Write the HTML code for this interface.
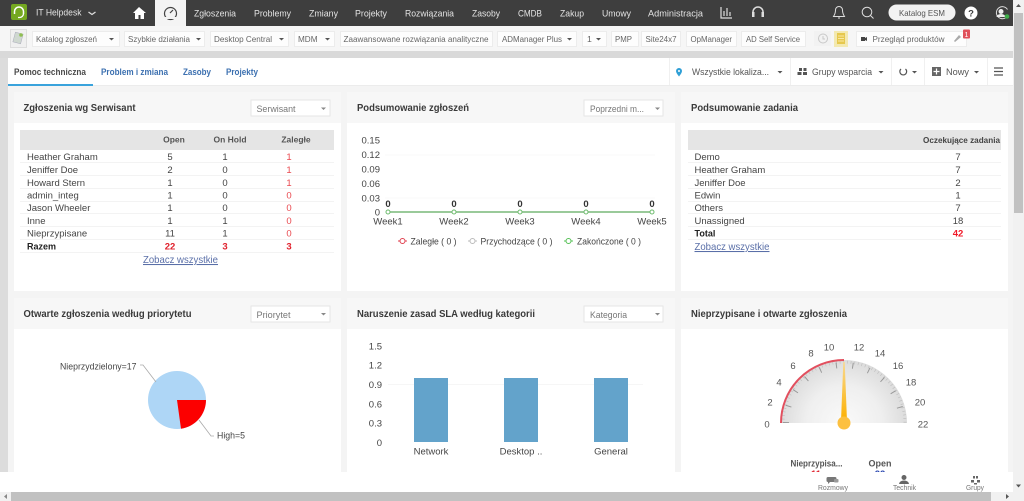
<!DOCTYPE html>
<html lang="pl"><head><meta charset="utf-8"><title>IT Helpdesk</title>
<style>
html,body{margin:0;padding:0;width:1024px;height:501px;overflow:hidden;background:#fff}
svg{display:block;font-family:"Liberation Sans",sans-serif;font-size:9.5px;fill:#444;filter:blur(.3px)}
.n{fill:#e4e4e4;font-size:9.5px}
.t{fill:#666;font-size:8.7px}
.h{font-weight:bold;font-size:10.5px;fill:#3a3a3a}
.s{fill:#777;font-size:9.5px}
.c{text-anchor:middle}
.r{text-anchor:end}
.b{font-weight:bold}
.red{fill:#e9494f}
.rb{fill:#e0202c;font-weight:bold}
.tab{fill:#3c70b0;font-weight:bold;font-size:9.5px}
.l{fill:#5a6fa8;font-size:10.5px;text-decoration:underline}
.box{fill:#fdfdfd;stroke:#ececec}
.sel{fill:#fff;stroke:#e6e6e6}
.ar{fill:#555}
.ln{stroke:#f3f3f3;stroke-width:1}
.ft{fill:#777;font-size:7.5px;text-anchor:middle}
</style></head><body>
<svg width="1024" height="501" viewBox="0 0 1024 501" xmlns="http://www.w3.org/2000/svg">
<defs>
<radialGradient id="g" cx="844" cy="423" r="63" gradientUnits="userSpaceOnUse"><stop offset="0" stop-color="#fafafa"/><stop offset=".6" stop-color="#efefef"/><stop offset="1" stop-color="#dcdcdc"/></radialGradient>
<linearGradient id="nd" x1="0" y1="0" x2="0" y2="1"><stop offset="0" stop-color="#f8d890"/><stop offset="1" stop-color="#fdb000"/></linearGradient>
</defs>

<rect width="1024" height="501" fill="#f4f4f4"/>
<!-- top bar -->
<rect width="1013" height="26" fill="#3e3e3e"/>
<rect x="155" width="31" height="26" fill="#f4f4f4"/>
<rect x="11" y="4" width="16" height="16" rx="2" fill="#74a820"/>
<path d="M14.500 14v-2.500a4.500 4.500 0 0 1 9 0V14" fill="none" stroke="#fff" stroke-width="1.500"/><path d="M23.500 14a4 4 0 0 1-4 3.500h-1.500" fill="none" stroke="#fff" stroke-width="1.300"/>
<text x="36" y="15.500" class="n" textLength="45.500" lengthAdjust="spacingAndGlyphs">IT Helpdesk</text>
<path d="M88.500 12l3.500 2.500 3.500-2.500" fill="none" stroke="#ddd" stroke-width="1.300"/>
<path d="M139 7l-6 6h2v6h3.500v-4h2v4h3.500v-6h2z" fill="#fff"/>
<circle cx="170.500" cy="13.500" r="6" fill="none" stroke="#444" stroke-width="1.200"/><path d="M170 13l3-3" stroke="#444" stroke-width="1.200"/><path d="M165 18h11" stroke="#f4f4f4" stroke-width="2"/>
<text x="194" y="16.500" class="n" textLength="42" lengthAdjust="spacingAndGlyphs">Zgłoszenia</text>
<text x="254" y="16.500" class="n" textLength="37" lengthAdjust="spacingAndGlyphs">Problemy</text>
<text x="309" y="16.500" class="n" textLength="29" lengthAdjust="spacingAndGlyphs">Zmiany</text>
<text x="355" y="16.500" class="n" textLength="32" lengthAdjust="spacingAndGlyphs">Projekty</text>
<text x="405" y="16.500" class="n" textLength="49" lengthAdjust="spacingAndGlyphs">Rozwiązania</text>
<text x="472" y="16.500" class="n" textLength="28" lengthAdjust="spacingAndGlyphs">Zasoby</text>
<text x="518" y="16.500" class="n" textLength="24" lengthAdjust="spacingAndGlyphs">CMDB</text>
<text x="560" y="16.500" class="n" textLength="24" lengthAdjust="spacingAndGlyphs">Zakup</text>
<text x="602" y="16.500" class="n" textLength="29" lengthAdjust="spacingAndGlyphs">Umowy</text>
<text x="648" y="16.500" class="n" textLength="55" lengthAdjust="spacingAndGlyphs">Administracja</text>
<path d="M721 7v11h11M724 16v-5M727 16v-8M730 16v-4" fill="none" stroke="#ddd" stroke-width="1.200"/>
<path d="M753 15v-3a5 5 0 0 1 10 0v3" fill="none" stroke="#ddd" stroke-width="1.500"/><rect x="752" y="12" width="2.500" height="5" fill="#ddd"/><rect x="761.500" y="12" width="2.500" height="5" fill="#ddd"/>
<path d="M839 6.500a3.500 3.500 0 0 0-3.500 3.500c0 4-1.500 5.500-2 6.500h11c-.5-1-2-2.500-2-6.500a3.500 3.500 0 0 0-3.500-3.500zM838 18h2" fill="none" stroke="#ddd" stroke-width="1"/>
<circle cx="867" cy="12" r="4.800" fill="none" stroke="#ddd" stroke-width="1"/><path d="M870.500 15.500l3 3" stroke="#ddd"/>
<rect x="888.500" y="4.500" width="67" height="16" rx="8" fill="#f2f2f2"/>
<text x="899" y="16" font-size="8.500" fill="#555" textLength="46" lengthAdjust="spacingAndGlyphs">Katalog ESM</text>
<circle cx="971" cy="13" r="6.500" fill="#fff"/><text x="971" y="16.500" class="c b" font-size="9.500" fill="#3e3e3e">?</text>
<path d="M1007.500 9.500a6 6 0 1 0-1.500 8" fill="none" stroke="#ddd"/><circle cx="1001" cy="11.500" r="2.500" fill="#eee"/><path d="M996.500 17a4.500 3 0 0 1 9 0z" fill="#eee"/><circle cx="1007" cy="16.500" r="2.300" fill="#3fae49"/>

<!-- toolbar -->
<rect y="26" width="1013" height="25" fill="#f6f6f6"/>
<rect y="51" width="1013" height="7" fill="#d9d9d9"/>
<rect x="10.500" y="29.500" width="16" height="18" fill="#f0f0f0" stroke="#ddd"/><rect x="14" y="33" width="8" height="10" fill="#cfd8d0" stroke="#aab" stroke-width=".5" transform="rotate(15 18 38)"/><circle cx="21" cy="35" r="1.800" fill="#8fbf50"/>
<g>
<rect class="box" x="32.500" y="31.500" width="87" height="15"/><text x="36" y="42" class="t" textLength="61" lengthAdjust="spacingAndGlyphs">Katalog zgłoszeń</text><path class="ar" d="M109 38h5l-2.500 2.500z"/>
<rect class="box" x="124.500" y="31.500" width="80" height="15"/><text x="128" y="42" class="t" textLength="62" lengthAdjust="spacingAndGlyphs">Szybkie działania</text><path class="ar" d="M196 38h5l-2.500 2.500z"/>
<rect class="box" x="210.500" y="31.500" width="78" height="15"/><text x="214" y="42" class="t" textLength="58" lengthAdjust="spacingAndGlyphs">Desktop Central</text><path class="ar" d="M279 38h5l-2.500 2.500z"/>
<rect class="box" x="294.500" y="31.500" width="40" height="15"/><text x="298" y="42" class="t" textLength="19.500" lengthAdjust="spacingAndGlyphs">MDM</text><path class="ar" d="M325 38h5l-2.500 2.500z"/>
<rect class="box" x="340.500" y="31.500" width="152" height="15"/><text x="343.500" y="42" class="t" textLength="145" lengthAdjust="spacingAndGlyphs">Zaawansowane rozwiązania analityczne</text>
<rect class="box" x="497.500" y="31.500" width="79" height="15"/><text x="502" y="42" class="t" textLength="60" lengthAdjust="spacingAndGlyphs">ADManager Plus</text><path class="ar" d="M567 38h5l-2.500 2.500z"/>
<rect class="box" x="582.500" y="31.500" width="24" height="15"/><text x="587" y="42" class="t">1</text><path class="ar" d="M596 38h5l-2.500 2.500z"/>
<rect class="box" x="611.500" y="31.500" width="27" height="15"/><text x="615" y="42" class="t" textLength="17" lengthAdjust="spacingAndGlyphs">PMP</text>
<rect class="box" x="641.500" y="31.500" width="39" height="15"/><text x="645.500" y="42" class="t" textLength="31" lengthAdjust="spacingAndGlyphs">Site24x7</text>
<rect class="box" x="686.500" y="31.500" width="50" height="15"/><text x="690.500" y="42" class="t" textLength="41.500" lengthAdjust="spacingAndGlyphs">OpManager</text>
<rect class="box" x="741.500" y="31.500" width="64" height="15"/><text x="746" y="42" class="t" textLength="54" lengthAdjust="spacingAndGlyphs">AD Self Service</text>
</g>
<rect x="814" y="31" width="17" height="15" fill="#f2f2f2"/><circle cx="823" cy="38.500" r="4.500" fill="none" stroke="#c8c8c8"/><path d="M823 36v3h2" fill="none" stroke="#c8c8c8"/>
<rect x="834" y="31" width="14" height="16" fill="#f3e9b0"/><rect x="837" y="33" width="8" height="11" fill="#e6c84e"/><path d="M838 36h6M838 38.500h6M838 41h6" stroke="#fff3c0" stroke-width=".8"/>
<rect class="box" x="856.500" y="31.500" width="110" height="15"/>
<rect x="861" y="37" width="4" height="4" fill="#444"/><path d="M865 38l2-1v4l-2-1z" fill="#444"/>
<text x="872.500" y="42" class="t" textLength="72" lengthAdjust="spacingAndGlyphs">Przegląd produktów</text>
<path d="M954 41l5-6 2 2-6 5z" fill="#aaa"/>
<rect x="963" y="29.500" width="7" height="9" rx="1" fill="#e0505a"/><text x="966.500" y="37" class="c" font-size="7" fill="#fff">1</text>

<!-- tab bar -->
<rect y="58" width="8" height="414" fill="#dcdcdc"/>
<rect x="8" y="58" width="1005" height="27" fill="#fff"/>
<rect x="8" y="84" width="85" height="2" fill="#3aa3dc"/>
<rect x="93" y="85" width="920" height="1" fill="#ececec"/>
<text x="14" y="75" font-size="9.500" class="b" fill="#4a4a4a" textLength="72" lengthAdjust="spacingAndGlyphs">Pomoc techniczna</text>
<text x="101" y="75" class="tab" textLength="67" lengthAdjust="spacingAndGlyphs">Problem i zmiana</text>
<text x="183" y="75" class="tab" textLength="28" lengthAdjust="spacingAndGlyphs">Zasoby</text>
<text x="226" y="75" class="tab" textLength="32" lengthAdjust="spacingAndGlyphs">Projekty</text>
<path d="M669.500 58v27M790.500 58v27M891.500 58v27M924.500 58v27M987.500 58v27" stroke="#f0f0f0"/>
<path d="M682 71a3 3 0 0 0-6 0c0 2 3 5.500 3 5.500s3-3.500 3-5.500z" fill="#2f9fd6"/><circle cx="679" cy="71" r="1" fill="#fff"/>
<text x="692" y="75" font-size="9.500" fill="#555" textLength="77" lengthAdjust="spacingAndGlyphs">Wszystkie lokaliza...</text><path class="ar" d="M777.500 71h5l-2.500 2.500z"/>
<path d="M799 68h3v3h-3zM803.500 68h3v3h-3zM797.500 72h4v3h-4zM803 72h4v3h-4z" fill="#555"/>
<text x="812" y="75" font-size="9.500" fill="#555" textLength="60" lengthAdjust="spacingAndGlyphs">Grupy wsparcia</text><path class="ar" d="M878.500 71h5l-2.500 2.500z"/>
<path d="M905.500 69a3.400 3.400 0 1 1-4.500 0" fill="none" stroke="#555" stroke-width="1.200"/><path class="ar" d="M912 71h5l-2.500 2.500z"/>
<rect x="932" y="67" width="9" height="9" fill="#666"/><path d="M936.500 68.500v6M933.500 71.500h6" stroke="#fff" stroke-width="1.200"/>
<text x="946" y="75" font-size="9.500" fill="#555" textLength="23" lengthAdjust="spacingAndGlyphs">Nowy</text><path class="ar" d="M974 71h5l-2.500 2.500z"/>
<path d="M994 68h9M994 71.500h9M994 75h9" stroke="#555" stroke-width="1.200"/>

<!-- cards -->
<g fill="#fff">
<rect x="14" y="123" width="327" height="168"/><rect x="347" y="123" width="328" height="168"/><rect x="681" y="123" width="327" height="168"/>
<rect x="14" y="329" width="327" height="143"/><rect x="347" y="329" width="328" height="143"/><rect x="681" y="329" width="327" height="143"/>
</g>
<g fill="#f7f7f7">
<rect x="14" y="92" width="327" height="31"/><rect x="347" y="92" width="328" height="31"/><rect x="681" y="92" width="327" height="31"/>
<rect x="14" y="298" width="327" height="31"/><rect x="347" y="298" width="328" height="31"/><rect x="681" y="298" width="327" height="31"/>
</g>

<text x="23.500" y="111" class="h" textLength="112" lengthAdjust="spacingAndGlyphs">Zgłoszenia wg Serwisant</text>
<rect class="sel" x="251" y="100" width="79" height="16"/><text x="256.500" y="112" class="s" textLength="39" lengthAdjust="spacingAndGlyphs">Serwisant</text><path fill="#888" d="M321 107.500h5l-2.500 2.500z"/>
<rect x="20" y="130" width="314" height="20" fill="#e5e5e5"/>
<g font-size="8.500" fill="#555">
<text x="174" y="142.500" class="c b">Open</text><text x="230" y="142.500" class="c b">On Hold</text><text x="296" y="142.500" class="c b">Zaległe</text>
</g>
<path class="ln" d="M20 162.500h314M20 175.500h314M20 188.500h314M20 201.500h314M20 213.500h314M20 226.500h314M20 239.500h314M20 252.500h314"/>
<g>
<text x="27" y="160">Heather Graham</text><text x="170" y="160" class="c">5</text><text x="225" y="160" class="c">1</text><text x="289" y="160" class="c red">1</text>
<text x="27" y="173">Jeniffer Doe</text><text x="170" y="173" class="c">2</text><text x="225" y="173" class="c">0</text><text x="289" y="173" class="c red">1</text>
<text x="27" y="186">Howard Stern</text><text x="170" y="186" class="c">1</text><text x="225" y="186" class="c">0</text><text x="289" y="186" class="c red">1</text>
<text x="27" y="198.500">admin_integ</text><text x="170" y="198.500" class="c">1</text><text x="225" y="198.500" class="c">0</text><text x="289" y="198.500" class="c red">0</text>
<text x="27" y="211">Jason Wheeler</text><text x="170" y="211" class="c">1</text><text x="225" y="211" class="c">0</text><text x="289" y="211" class="c red">0</text>
<text x="27" y="224">Inne</text><text x="170" y="224" class="c">1</text><text x="225" y="224" class="c">1</text><text x="289" y="224" class="c red">0</text>
<text x="27" y="236.500">Nieprzypisane</text><text x="170" y="236.500" class="c">11</text><text x="225" y="236.500" class="c">1</text><text x="289" y="236.500" class="c red">0</text>
<text x="27" y="249.500" class="b" fill="#222" font-size="9">Razem</text><text x="170" y="249.500" class="c rb">22</text><text x="225" y="249.500" class="c rb">3</text><text x="289" y="249.500" class="c rb">3</text>
</g>
<text x="143" y="263" class="l" textLength="75" lengthAdjust="spacingAndGlyphs">Zobacz wszystkie</text>

<text x="357" y="111" class="h" textLength="112" lengthAdjust="spacingAndGlyphs">Podsumowanie zgłoszeń</text>
<rect class="sel" x="584" y="100" width="79" height="16"/><text x="590" y="112" class="s" textLength="54" lengthAdjust="spacingAndGlyphs">Poprzedni m...</text><path fill="#888" d="M655 107.500h5l-2.500 2.500z"/>
<text x="380" y="143.500" class="r">0.15</text><text x="380" y="158" class="r">0.12</text><text x="380" y="172.500" class="r">0.09</text><text x="380" y="187" class="r">0.06</text><text x="380" y="201.500" class="r">0.03</text><text x="380" y="215.500" class="r">0</text>
<path d="M385 155h270M385 198h270" stroke="#f8f8f8"/>
<path d="M388 212h264" stroke="#79b879" stroke-width="1.500"/>
<g fill="#fff" stroke="#6dbb6d"><circle cx="388" cy="212" r="2"/><circle cx="454" cy="212" r="2"/><circle cx="520" cy="212" r="2"/><circle cx="586" cy="212" r="2"/><circle cx="652" cy="212" r="2"/></g>
<g fill="#333"><text x="388" y="207" class="c b">0</text><text x="454" y="207" class="c b">0</text><text x="520" y="207" class="c b">0</text><text x="586" y="207" class="c b">0</text><text x="652" y="207" class="c b">0</text></g>
<text x="388" y="224.500" class="c">Week1</text><text x="454" y="224.500" class="c">Week2</text><text x="520" y="224.500" class="c">Week3</text><text x="586" y="224.500" class="c">Week4</text><text x="652" y="224.500" class="c">Week5</text>
<path d="M398 241h9" stroke="#e0404f"/><circle cx="402.500" cy="241" r="2.500" fill="#fff" stroke="#e0404f"/>
<text x="410.500" y="244.500" textLength="46" lengthAdjust="spacingAndGlyphs">Zaległe ( 0 )</text>
<path d="M468 241h9" stroke="#bbb"/><circle cx="472.500" cy="241" r="2.500" fill="#fff" stroke="#bbb"/>
<text x="480.500" y="244.500" textLength="72" lengthAdjust="spacingAndGlyphs">Przychodzące ( 0 )</text>
<path d="M564 241h9" stroke="#55c055"/><circle cx="568.500" cy="241" r="2.500" fill="#fff" stroke="#55c055"/>
<text x="577" y="244.500" textLength="64" lengthAdjust="spacingAndGlyphs">Zakończone ( 0 )</text>

<text x="691" y="111" class="h" textLength="107" lengthAdjust="spacingAndGlyphs">Podsumowanie zadania</text>
<rect x="688" y="130" width="313" height="20" fill="#e5e5e5"/>
<text x="923" y="143" class="b" font-size="8.500" fill="#444" textLength="77" lengthAdjust="spacingAndGlyphs">Oczekujące zadania</text>
<path class="ln" d="M688 162.500h313M688 175.500h313M688 188.500h313M688 201.500h313M688 213.500h313M688 226.500h313M688 239.500h313"/>
<text x="694.500" y="160">Demo</text><text x="958" y="160" class="c">7</text>
<text x="694.500" y="173">Heather Graham</text><text x="958" y="173" class="c">7</text>
<text x="694.500" y="186">Jeniffer Doe</text><text x="958" y="186" class="c">2</text>
<text x="694.500" y="198.500">Edwin</text><text x="958" y="198.500" class="c">1</text>
<text x="694.500" y="211">Others</text><text x="958" y="211" class="c">7</text>
<text x="694.500" y="224">Unassigned</text><text x="958" y="224" class="c">18</text>
<text x="694.500" y="236.500" class="b" fill="#222" font-size="9">Total</text><text x="958" y="236.500" class="c b" fill="#f01828">42</text>
<text x="694.500" y="250" class="l" textLength="75" lengthAdjust="spacingAndGlyphs">Zobacz wszystkie</text>

<!-- row 2 -->
<text x="23.500" y="317" class="h" textLength="168" lengthAdjust="spacingAndGlyphs">Otwarte zgłoszenia według priorytetu</text>
<rect class="sel" x="251" y="306" width="79" height="16"/><text x="256.500" y="318" class="s" textLength="34" lengthAdjust="spacingAndGlyphs">Priorytet</text><path fill="#888" d="M321 313h5l-2.500 2.500z"/>
<circle cx="177" cy="400" r="29" fill="#aed6f6"/>
<path d="M177 400h29a29 29 0 0 1-25 28.700z" fill="#fc0000"/>
<path d="M140 365h3l13 17M199 420l12 16h3" fill="none" stroke="#aaa" stroke-width=".8"/>
<text x="60" y="369.500" textLength="76.500" lengthAdjust="spacingAndGlyphs">Nieprzydzielony=17</text>
<text x="217" y="438.500" textLength="28" lengthAdjust="spacingAndGlyphs">High=5</text>

<text x="357" y="317" class="h" textLength="178" lengthAdjust="spacingAndGlyphs">Naruszenie zasad SLA według kategorii</text>
<rect class="sel" x="584" y="306" width="79" height="16"/><text x="590" y="318" class="s" textLength="37" lengthAdjust="spacingAndGlyphs">Kategoria</text><path fill="#888" d="M655 313h5l-2.500 2.500z"/>
<text x="382" y="349.500" class="r">1.5</text><text x="382" y="368.500" class="r">1.2</text><text x="382" y="388" class="r">0.9</text><text x="382" y="407.500" class="r">0.6</text><text x="382" y="426.500" class="r">0.3</text><text x="382" y="446" class="r">0</text>
<path d="M388 384.500h255" stroke="#f6f6f6"/>
<g fill="#63a3cb"><rect x="414" y="378" width="34" height="64"/><rect x="504" y="378" width="34" height="64"/><rect x="594" y="378" width="34" height="64"/></g>
<text x="431" y="454.500" class="c">Network</text><text x="521" y="454.500" class="c">Desktop ..</text><text x="611" y="454.500" class="c">General</text>

<text x="691" y="317" class="h" textLength="156" lengthAdjust="spacingAndGlyphs">Nieprzypisane i otwarte zgłoszenia</text>
<path d="M781 423a63 63 0 0 1 126 0z" fill="url(#g)"/>
<path d="M783 423a61 61 0 0 1 122 0" fill="none" stroke="#bdbdbd" stroke-width="3" stroke-dasharray=".6 3.060"/>
<path d="M786 423a58 58 0 0 1 116 0" fill="none" stroke="#999" stroke-width="6" stroke-dasharray="1 15.570"/>
<path d="M781 423a63 63 0 0 1 63-63" fill="none" stroke="#e2505f" stroke-width="2"/>
<polygon points="843.300,362 844.700,362 847,421 841,421" fill="url(#nd)"/>
<circle cx="844" cy="423" r="6.500" fill="#fcc040"/>
<g fill="#555" font-size="9.500">
<text x="767" y="427.500" class="c">0</text><text x="770" y="405.500" class="c">2</text><text x="779" y="385.500" class="c">4</text><text x="793" y="369" class="c">6</text><text x="811" y="356.500" class="c">8</text><text x="829" y="350.500" class="c">10</text><text x="859" y="350.500" class="c">12</text><text x="880" y="356.500" class="c">14</text><text x="898" y="369" class="c">16</text><text x="911" y="385.500" class="c">18</text><text x="920" y="405.500" class="c">20</text><text x="923" y="427.500" class="c">22</text>
</g>
<text x="790.500" y="466.500" class="b" font-size="9" fill="#555" textLength="52" lengthAdjust="spacingAndGlyphs">Nieprzypisa...</text>
<text x="880" y="466.500" class="c b" font-size="9" fill="#555">Open</text>
<text x="816" y="477" class="c rb">11</text><text x="880" y="477" class="c b" fill="#2a47b0">22</text>

<!-- bottom bar -->
<rect y="472" width="1013" height="20" fill="#fff"/>
<path d="M828 477h7a1.500 1.500 0 0 1 1.500 1.500v2a1.500 1.500 0 0 1-1.500 1.500h-5l-2 2v-2a1.500 1.500 0 0 1-1.500-1.500v-2a1.500 1.500 0 0 1 1.500-1.500z" fill="#777"/><rect x="834" y="479" width="4.500" height="3.500" rx="1" fill="#999"/>
<text x="833" y="490" class="ft" textLength="30" lengthAdjust="spacingAndGlyphs">Rozmowy</text>
<circle cx="904" cy="477.500" r="2.500" fill="#666"/><path d="M899 484a5 3.500 0 0 1 10 0z" fill="#666"/>
<text x="904.500" y="490" class="ft" textLength="23" lengthAdjust="spacingAndGlyphs">Technik</text>
<path d="M973 476h2v2.500h-2zM976 476h2v2.500h-2zM971 480h3v2.500h-3zM977 480h3v2.500h-3zM974 483h3v1.500h-3z" fill="#666"/>
<text x="975" y="490" class="ft" textLength="18" lengthAdjust="spacingAndGlyphs">Grupy</text>

<!-- scrollbars -->
<rect x="1013" y="0" width="11" height="501" fill="#f1f1f1"/>
<rect x="1014" y="13" width="9" height="200" fill="#c1c1c1"/>
<path d="M1016 7l2.500-3 2.500 3z" fill="#555"/>
<path d="M1016 484.500h5l-2.500 3z" fill="#555"/>
<rect y="492" width="1024" height="9" fill="#f1f1f1"/>
<rect x="11" y="492" width="980" height="9" fill="#c1c1c1"/>
<path d="M7 494l-3 2.500 3 2.500z" fill="#888"/>
<path d="M1006 494l3 2.500-3 2.500z" fill="#555"/>
</svg>
</body></html>
